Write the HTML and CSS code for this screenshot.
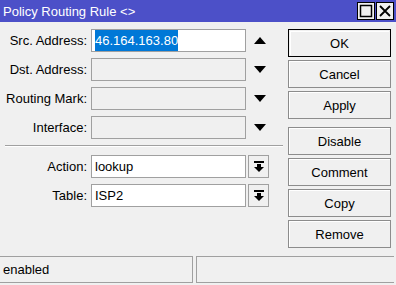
FILE: index.html
```html
<!DOCTYPE html>
<html>
<head>
    <title>Policy Routing Rule</title>
    <link rel="stylesheet" href="styles.css">
</head>
<body>
    <div class="window">
        <div class="titlebar">
            <span class="title">Policy Routing Rule &lt;&gt;</span>
            <div class="title-buttons">
                <span class="tbtn">
                    <svg width="14" height="14" viewBox="0 0 14 14"><rect x="1.5" y="1.5" width="11" height="11" fill="none" stroke="#000" stroke-width="1.5"/></svg>
                </span>
                <span class="tbtn">
                    <svg width="14" height="14" viewBox="0 0 14 14"><path d="M2 2 L12 12 M12 2 L2 12" stroke="#000" stroke-width="1.8"/></svg>
                </span>
            </div>
        </div>

        <div class="main">
            <div class="form">
                <!-- address fields -->
                <div class="row">
                    <label>Src. Address:</label>
                    <div class="field"><span class="selected">46.164.163.80</span></div>
                    <span class="arrow"><svg width="12" height="7" viewBox="0 0 12 7"><polygon points="6,0 12,7 0,7" fill="#000"/></svg></span>
                </div>
                <div class="row">
                    <label>Dst. Address:</label>
                    <div class="field empty"></div>
                    <span class="arrow"><svg width="12" height="7" viewBox="0 0 12 7"><polygon points="0,0 12,0 6,7" fill="#000"/></svg></span>
                </div>
                <div class="row">
                    <label>Routing Mark:</label>
                    <div class="field empty"></div>
                    <span class="arrow"><svg width="12" height="7" viewBox="0 0 12 7"><polygon points="0,0 12,0 6,7" fill="#000"/></svg></span>
                </div>
                <div class="row">
                    <label>Interface:</label>
                    <div class="field empty"></div>
                    <span class="arrow"><svg width="12" height="7" viewBox="0 0 12 7"><polygon points="0,0 12,0 6,7" fill="#000"/></svg></span>
                </div>

                <div class="separator"></div>

                <!-- action fields -->
                <div class="row">
                    <label>Action:</label>
                    <div class="field">lookup</div>
                    <span class="dropbtn"><svg width="10" height="11" viewBox="0 0 10 11"><rect x="0" y="0" width="10" height="2" fill="#000"/><rect x="3" y="3" width="4" height="3" fill="#000"/><polygon points="0,6 10,6 5,11" fill="#000"/></svg></span>
                </div>
                <div class="row">
                    <label>Table:</label>
                    <div class="field">ISP2</div>
                    <span class="dropbtn"><svg width="10" height="11" viewBox="0 0 10 11"><rect x="0" y="0" width="10" height="2" fill="#000"/><rect x="3" y="3" width="4" height="3" fill="#000"/><polygon points="0,6 10,6 5,11" fill="#000"/></svg></span>
                </div>
            </div>

            <div class="buttons">
                <button class="default">OK</button>
                <button>Cancel</button>
                <button>Apply</button>
                <button class="spaced">Disable</button>
                <button>Comment</button>
                <button>Copy</button>
                <button>Remove</button>
            </div>
        </div>

        <div class="statusbar">
            <div class="panel left">enabled</div>
            <div class="panel right"></div>
        </div>
    </div>
</body>
</html>
```

FILE: styles.css
```css
body {
    margin: 0;
    font-family: "Liberation Sans", Arial, sans-serif;
    font-size: 13px;
    color: #000;
    background-color: #f0f0f0;
}
.window {
    width: 396px;
    height: 285px;
    display: flex;
    flex-direction: column;
    background-color: #f0f0f0;
}
.titlebar {
    height: 22px;
    background-color: #4c50c8;
    display: flex;
    align-items: center;
    justify-content: space-between;
    flex-shrink: 0;
}
.title {
    color: #fff;
    padding-left: 3px;
    font-size: 13px;
}
.title-buttons {
    display: flex;
    gap: 1px;
    padding-right: 2px;
}
.tbtn {
    width: 16px;
    height: 16px;
    background-color: #f0f0f0;
    border: 1px solid #000;
    display: flex;
    align-items: center;
    justify-content: center;
}
.main {
    flex: 1;
    display: flex;
    padding-top: 7px;
}
.form {
    width: 288px;
}
.row {
    display: flex;
    align-items: center;
    height: 23px;
    margin-bottom: 6px;
}
label {
    width: 87px;
    text-align: right;
    margin-right: 4px;
    flex-shrink: 0;
}
.field {
    width: 153px;
    height: 21px;
    border: 1px solid #a0a0a0;
    background-color: #fff;
    display: flex;
    align-items: center;
    padding-left: 3px;
    box-sizing: content-box;
    width: 150px;
}
.field.empty {
    background-color: #f0f0f0;
}
.selected {
    background-color: #0078d7;
    color: #fff;
    padding: 2px 0;
    line-height: 17px;
}
.arrow {
    width: 12px;
    margin-left: 8px;
    display: flex;
    align-items: center;
}
.dropbtn {
    width: 19px;
    height: 21px;
    margin-left: 2px;
    border: 1px solid #a0a0a0;
    display: flex;
    align-items: center;
    justify-content: center;
}
.separator {
    height: 1px;
    border-top: 1px solid #a0a0a0;
    background-color: #fff;
    margin: 3px 5px 8px 5px;
}
.buttons {
    display: flex;
    flex-direction: column;
    gap: 3px;
    width: 103px;
}
button {
    height: 28px;
    background-color: #f0f0f0;
    border: 1px solid #8c8c8c;
    box-shadow: inset 1px 1px 0 #fff;
    font-family: "Liberation Sans", Arial, sans-serif;
    font-size: 13px;
    color: #000;
    padding: 0;
}
button.default {
    border: 1px solid #000;
    box-shadow: inset 0 0 0 1px #f0f0f0, inset 1px 1px 0 1px #fff;
}
button.spaced {
    margin-top: 5px;
}
.statusbar {
    height: 27px;
    display: flex;
    gap: 3px;
    margin-bottom: 2px;
    flex-shrink: 0;
}
.panel {
    border-top: 1px solid #a0a0a0;
    border-bottom: 1px solid #a0a0a0;
    display: flex;
    align-items: center;
    padding-left: 3px;
}
.panel.left {
    width: 189px;
    border-right: 1px solid #a0a0a0;
}
.panel.right {
    flex: 1;
    border-left: 1px solid #a0a0a0;
    margin-right: 2px;
}
```
